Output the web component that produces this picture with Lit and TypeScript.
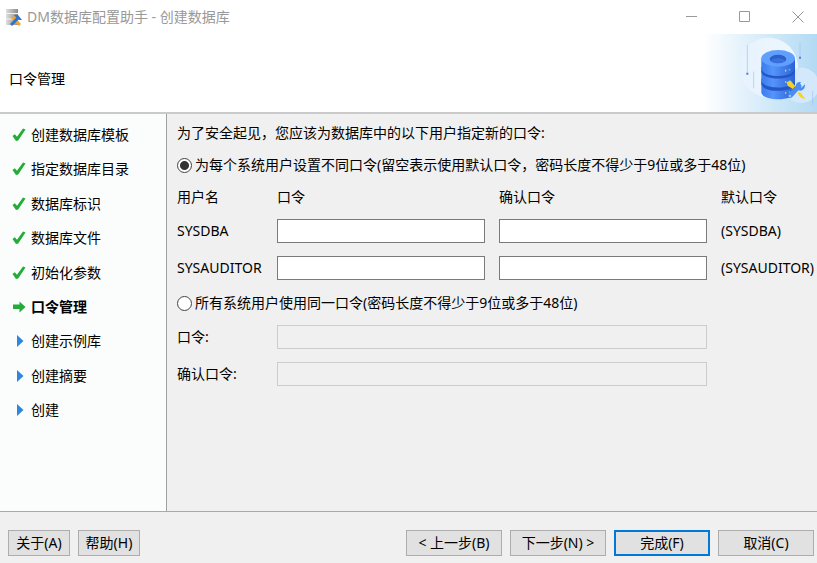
import { LitElement, html, css, svg } from "lit";
import { customElement, state } from "lit/decorators.js";

type StepState = "done" | "current" | "todo";

const steps: { label: string; state: StepState }[] = [
  { label: "创建数据库模板", state: "done" },
  { label: "指定数据库目录", state: "done" },
  { label: "数据库标识", state: "done" },
  { label: "数据库文件", state: "done" },
  { label: "初始化参数", state: "done" },
  { label: "口令管理", state: "current" },
  { label: "创建示例库", state: "todo" },
  { label: "创建摘要", state: "todo" },
  { label: "创建", state: "todo" },
];

const glyphs = {
  done: svg`<path d="M0.500 8 L2.800 6.200 L5 8.700 L11 0.500 L13.500 1.500 L6.200 12.500 L4 13 Z" fill="#23ac38"/>`,
  current: svg`<path d="M1 4.500 H7.500 V1.500 L13.500 7 L7.500 12.500 V9 H1 Z" fill="#23ac38"/>`,
  todo: svg`<path d="M5 1 L11.500 7 L5 13 Z" fill="#2f86de"/>`,
};

const users = ["SYSDBA", "SYSAUDITOR"];

@customElement("app-root")
export class AppRoot extends LitElement {
  @state() private mode: "each" | "same" = "each";

  static styles = css`
    :host {
      display: flex;
      flex-direction: column;
      min-height: 100vh;
      background: #f0f0f0;
      color: #000;
      font: 14px/20px "Noto Sans", "Noto Sans CJK SC", sans-serif;
    }
    * { box-sizing: border-box; }
    svg { display: block; flex: none; }
    .titlebar {
      display: flex;
      align-items: center;
      height: 34px;
      padding-left: 5px;
      background: #fff;
      color: #999;
    }
    .title { flex: 1; margin-left: 4px; white-space: nowrap; }
    .winbtn {
      display: grid;
      place-items: center;
      width: 53px;
      height: 34px;
      padding: 0;
      border: 0;
      background: none;
    }
    .winbtns { display: flex; margin-right: -7px; }
    .banner {
      display: flex;
      align-items: center;
      justify-content: space-between;
      height: 80px;
      background: #fff;
      border-bottom: 2px solid #cacaca;
    }
    .heading { margin: 12px 0 0 9px; font-size: 14px; font-weight: 400; }
    .body { display: flex; flex: 1; border-bottom: 1px solid #a9a9a9; }
    .steps {
      flex: none;
      width: 167px;
      padding: 11px 0 11px 12px;
      background: #fafdfc;
      border-right: 1px solid #a0a0a0;
    }
    .list {
      display: flex;
      flex-direction: column;
      justify-content: space-between;
      height: 295px;
      margin: 0;
      padding: 0;
      list-style: none;
    }
    .step { display: flex; align-items: center; gap: 5px; }
    .current { font-weight: 700; }
    .main { flex: 1; min-width: 0; padding: 9px 0 9px 10px; }
    .intro { margin: 0 0 12px; }
    .choice { display: flex; align-items: center; gap: 3px; white-space: nowrap; }
    .radio {
      appearance: none;
      flex: none;
      width: 15px;
      height: 15px;
      margin: 0;
      border: 1px solid #444;
      border-radius: 50%;
      background: #fff;
    }
    .radio:checked { background: radial-gradient(circle, #333 4px, #fff 5px); }
    .users {
      width: 100%;
      margin: 12px 0 13px;
      border-collapse: collapse;
      table-layout: fixed;
    }
    .users th { height: 19px; padding: 0; line-height: 19px; font-weight: inherit; text-align: left; }
    .users td { height: 37px; padding: 13px 0 0; }
    .namecol { width: 100px; }
    .defcol { width: 96px; }
    .name, .default { display: block; line-height: 24px; white-space: nowrap; }
    .users .cell { padding-right: 14px; }
    .field {
      display: block;
      width: 100%;
      height: 24px;
      padding: 2px 4px;
      border: 1px solid #7a7a7a;
      border-radius: 0;
      background: #fff;
      font: inherit;
    }
    .field:disabled { border-color: #ccc; background: #f0f0f0; }
    .shared {
      display: grid;
      grid-template-columns: 100px 1fr;
      gap: 13px 0;
      align-items: center;
      margin: 12px 110px 0 0;
    }
    .footer { display: flex; gap: 8px; padding: 18px 3px 7px 8px; }
    .btn {
      width: 96px;
      height: 26px;
      padding: 0;
      border: 1px solid #adadad;
      background: #e1e1e1;
      color: #000;
      font: inherit;
      white-space: nowrap;
    }
    .small { width: 62px; }
    .primary { border: 2px solid #0078d7; }
    .spacer { flex: 1; }
  `;

  private appIcon() {
    return html`<svg width="18" height="19" viewBox="0 0 18 19" aria-hidden="true">
      <defs><linearGradient id="metal"><stop offset="0" stop-color="#dedede" /><stop offset="1" stop-color="#8c8c8c" /></linearGradient></defs>
      <path d="M1 1 H13 V17 H1 Z" fill="url(#metal)" />
      <path d="M1 5.500 H13 M1 11 H13" stroke="#f2f2f2" />
      <path d="M6 10 L9 8 L16 16 L14 18 Z" fill="#f2a52c" />
      <path d="M6 17 L13 10" stroke="#3471c4" stroke-width="3" />
      <path d="M9 7 L13 7 L17 12 L14 12 Z" fill="#3471c4" />
    </svg>`;
  }

  private art() {
    return html`<svg width="114" height="78" viewBox="99 102 342 234" aria-hidden="true">
      <defs>
        <linearGradient id="sky"><stop offset="0" stop-color="#fff" /><stop offset=".5" stop-color="#d8ecfa" /><stop offset="1" stop-color="#b3daf4" /></linearGradient>
        <linearGradient id="side"><stop offset="0" stop-color="#3a7cf0" /><stop offset=".35" stop-color="#5594fb" /><stop offset="1" stop-color="#2b62d9" /></linearGradient>
        <linearGradient id="disc"><stop offset="0" stop-color="#e6f2fd" /><stop offset="1" stop-color="#eef7fe" /></linearGradient>
      </defs>
      <rect x="99" y="102" width="342" height="234" fill="url(#sky)" />
      <circle cx="295" cy="202" r="89" fill="url(#disc)" />
      <circle cx="394" cy="256" r="53" fill="#d3e8fa" />
      <path d="M232 135 V222 M390 128 V175 M251 215 V265 M428 272 V315" stroke="#a3c2ee" stroke-width="2" />
      <path d="M229 218 h6 v6 h-6z M387 170 h6 v6 h-6z" fill="#4b7fe0" />
      <path d="M274 245 V276 C274 305 375 305 375 276 V245 Z" fill="url(#side)" />
      <path d="M274 236 V250 C274 280 375 280 375 250 V236 Z" fill="#2456c4" />
      <path d="M274 210 V240 C274 270 375 270 375 240 V210 Z" fill="url(#side)" />
      <path d="M274 200 V214 C274 243 375 243 375 214 V200 Z" fill="#2456c4" />
      <path d="M274 175 V204 C274 236 375 236 375 204 V175 Z" fill="url(#side)" />
      <ellipse cx="324.500" cy="175" rx="50.500" ry="25" fill="#619fff" />
      <ellipse cx="324" cy="177" rx="25" ry="13" fill="#2c5fc9" />
      <ellipse cx="324" cy="182" rx="20" ry="7" fill="#3972dc" />
      <path d="M345 212 h4 M345 246 h4 M345 279 h4" stroke="#ffd52e" stroke-width="5" />
      <path d="M356 209 h5 M356 243 h5 M356 276 h5" stroke="#33c4f3" stroke-width="5" />
      <path d="M350 246 L362 242 L376 259 L369 267 L353 257 Z M382 278 L390 276 L406 297 L397 295 L388 288 Z" fill="#f7d21e" />
      <path d="M361 286 L387 258" stroke="#4a8cf2" stroke-width="15" stroke-linecap="round" />
      <path d="M379 264 C374 250 384 244 393 246 L387 256 L394 263 L405 253 C406 269 394 275 385 271 Z" fill="#4a8cf2" />
      <circle cx="360" cy="288" r="3" fill="#b6d8ff" />
    </svg>`;
  }

  render() {
    const same = this.mode === "same";
    return html`
      <header class="titlebar">
        ${this.appIcon()}
        <span class="title">DM数据库配置助手 - 创建数据库</span>
        <div class="winbtns">
          <button class="winbtn" aria-label="最小化"><svg width="12" height="12" viewBox="0 0 12 12"><path d="M0 5.500 H11" stroke="#999" /></svg></button>
          <button class="winbtn" aria-label="最大化"><svg width="12" height="12" viewBox="0 0 12 12"><path d="M.5 .5 H10.500 V10.500 H.5 Z" fill="none" stroke="#999" /></svg></button>
          <button class="winbtn" aria-label="关闭"><svg width="12" height="12" viewBox="0 0 12 12"><path d="M.5 .5 L11.500 11.500 M11.500 .5 L.5 11.500" stroke="#999" /></svg></button>
        </div>
      </header>
      <div class="banner">
        <h1 class="heading">口令管理</h1>
        ${this.art()}
      </div>
      <div class="body">
        <nav class="steps">
          <ol class="list">
            ${steps.map(
              (s) => html`<li class="step ${s.state}">
                <svg width="14" height="14" viewBox="0 0 14 14" aria-hidden="true">${glyphs[s.state]}</svg>
                <span>${s.label}</span>
              </li>`
            )}
          </ol>
        </nav>
        <main class="main">
          <p class="intro">为了安全起见，您应该为数据库中的以下用户指定新的口令:</p>
          <label class="choice">
            <input class="radio" type="radio" name="mode" .checked=${!same} @change=${() => (this.mode = "each")} />
            <span>为每个系统用户设置不同口令(留空表示使用默认口令，密码长度不得少于9位或多于48位)</span>
          </label>
          <table class="users">
            <colgroup><col class="namecol" /><col /><col /><col class="defcol" /></colgroup>
            <thead>
              <tr><th>用户名</th><th>口令</th><th>确认口令</th><th>默认口令</th></tr>
            </thead>
            <tbody>
              ${users.map(
                (u) => html`<tr>
                  <td><label class="name" for=${"pw-" + u}>${u}</label></td>
                  <td class="cell"><input class="field" type="password" id=${"pw-" + u} ?disabled=${same} /></td>
                  <td class="cell"><input class="field" type="password" aria-label=${u + " 确认口令"} ?disabled=${same} /></td>
                  <td><span class="default">(${u})</span></td>
                </tr>`
              )}
            </tbody>
          </table>
          <label class="choice">
            <input class="radio" type="radio" name="mode" .checked=${same} @change=${() => (this.mode = "same")} />
            <span>所有系统用户使用同一口令(密码长度不得少于9位或多于48位)</span>
          </label>
          <div class="shared">
            <label for="shared-pw">口令:</label>
            <input class="field" type="password" id="shared-pw" ?disabled=${!same} />
            <label for="shared-confirm">确认口令:</label>
            <input class="field" type="password" id="shared-confirm" ?disabled=${!same} />
          </div>
        </main>
      </div>
      <footer class="footer">
        <button class="btn small">关于(A)</button>
        <button class="btn small">帮助(H)</button>
        <span class="spacer"></span>
        <button class="btn">&lt; 上一步(B)</button>
        <button class="btn">下一步(N) &gt;</button>
        <button class="btn primary">完成(F)</button>
        <button class="btn">取消(C)</button>
      </footer>
    `;
  }
}
